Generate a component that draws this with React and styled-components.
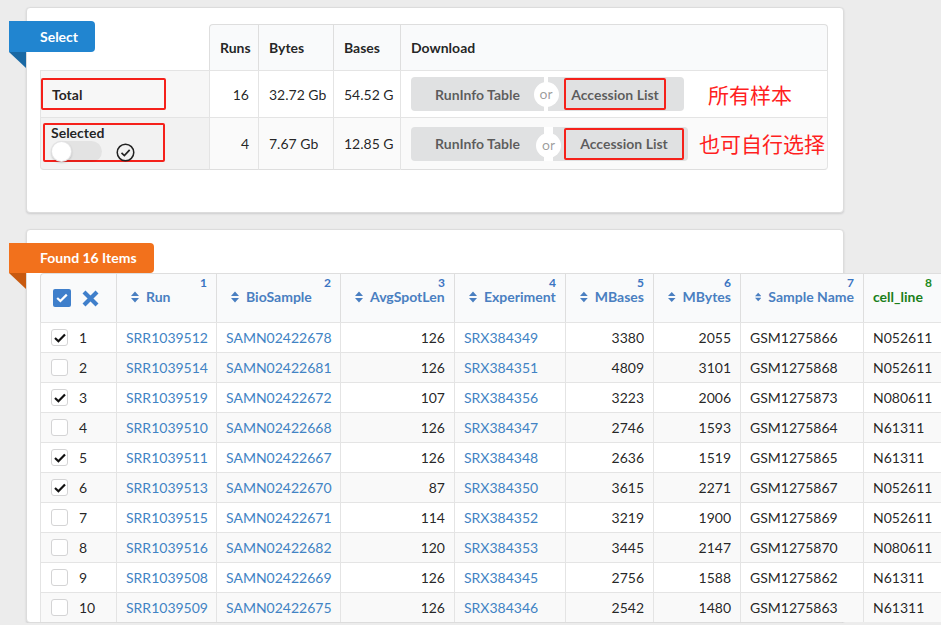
import styled, { createGlobalStyle } from "styled-components";

const GlobalStyle = createGlobalStyle`
  html, body {
    margin: 0;
    padding: 0;
    background: #ececec;
    overflow: hidden;
    font-family: Lato, "Noto Sans CJK SC", sans-serif;
  }
`;

const runs = [
  [1, "SRR1039512", "SAMN02422678", 126, "SRX384349", 3380, 2055, "GSM1275866", "N052611", true],
  [2, "SRR1039514", "SAMN02422681", 126, "SRX384351", 4809, 3101, "GSM1275868", "N052611", false],
  [3, "SRR1039519", "SAMN02422672", 107, "SRX384356", 3223, 2006, "GSM1275873", "N080611", true],
  [4, "SRR1039510", "SAMN02422668", 126, "SRX384347", 2746, 1593, "GSM1275864", "N61311", false],
  [5, "SRR1039511", "SAMN02422667", 126, "SRX384348", 2636, 1519, "GSM1275865", "N61311", true],
  [6, "SRR1039513", "SAMN02422670", 87, "SRX384350", 3615, 2271, "GSM1275867", "N052611", true],
  [7, "SRR1039515", "SAMN02422671", 114, "SRX384352", 3219, 1900, "GSM1275869", "N052611", false],
  [8, "SRR1039516", "SAMN02422682", 120, "SRX384353", 3445, 2147, "GSM1275870", "N080611", false],
  [9, "SRR1039508", "SAMN02422669", 126, "SRX384345", 2756, 1588, "GSM1275862", "N61311", false],
  [10, "SRR1039509", "SAMN02422675", 126, "SRX384346", 2542, 1480, "GSM1275863", "N61311", false],
];

const columns = [
  { label: "Run", width: 100 },
  { label: "BioSample", width: 124 },
  { label: "AvgSpotLen", width: 114 },
  { label: "Experiment", width: 111 },
  { label: "MBases", width: 88 },
  { label: "MBytes", width: 87 },
  { label: "Sample Name", width: 123 },
  { label: "cell_line", width: 78, green: true },
];

const Page = styled.div`
  display: flex;
  flex-direction: column;
  gap: 16px;
  width: 818px;
  padding: 7px 0 0 26px;
`;

const Card = styled.div`
  position: relative;
  background: #fff;
  border: 1px solid #dcdcdc;
  border-radius: 4px;
  box-shadow: 0 1px 2px rgba(34, 36, 38, 0.15);
  padding: ${(p) => p.$pad};
`;

const Ribbon = styled.div`
  position: absolute;
  left: -18px;
  top: 13px;
  height: ${(p) => p.$h}px;
  line-height: ${(p) => p.$h}px;
  padding: 0 17px 0 31px;
  background: ${(p) => p.$color};
  color: #fff;
  font-size: 14px;
  font-weight: 700;
  border-radius: 0 4px 4px 0;
  z-index: 2;
  &::after {
    content: "";
    position: absolute;
    left: 0;
    top: 100%;
    width: 0;
    height: 0;
    border-top: 16px solid ${(p) => p.$dark};
    border-left: 17px solid transparent;
  }
`;

/* ---------- summary table ---------- */

const SummaryTable = styled.table`
  border-collapse: separate;
  border-spacing: 0;
  table-layout: fixed;
  width: 788px;
  font-size: 14px;
  color: rgba(0, 0, 0, 0.87);
`;

const SumHead = styled.th`
  height: 45px;
  padding: 0 10px;
  text-align: left;
  font-weight: 700;
  background: #f9fafb;
  border-top: 1px solid #dedede;
  border-left: 1px solid #dedede;
  &:first-child {
    background: transparent;
    border: none;
  }
  &:nth-child(2) {
    border-top-left-radius: 4px;
  }
  &:last-child {
    border-right: 1px solid #dedede;
    border-top-right-radius: 4px;
  }
`;

const SumRow = styled.tr`
  height: ${(p) => p.$h}px;
  background: ${(p) => (p.$striped ? "#fafafa" : "#fff")};
`;

const SumCell = styled.td`
  padding: 0 ${(p) => (p.$right ? "9px" : "10px")};
  text-align: ${(p) => (p.$right ? "right" : "left")};
  border-top: 1px solid #e4e4e4;
  border-left: 1px solid #e4e4e4;
  vertical-align: middle;
  white-space: nowrap;
  &:last-child {
    border-right: 1px solid #e4e4e4;
  }
  tr:last-child > & {
    border-bottom: 1px solid #dedede;
  }
  tr:last-child > &:first-child {
    border-bottom-left-radius: 4px;
  }
  tr:last-child > &:last-child {
    border-bottom-right-radius: 4px;
  }
`;

const DefCell = styled(SumCell)`
  padding: 0 0 0 ${(p) => p.$inset}px;
  background: rgba(0, 0, 0, 0.03);
  font-weight: 700;
`;

const RedBox = styled.div`
  box-sizing: border-box;
  width: ${(p) => p.$w}px;
  height: ${(p) => p.$h}px;
  border: 2px solid #f5211b;
  border-radius: 2px;
`;

const TotalBox = styled(RedBox)`
  display: flex;
  align-items: center;
  padding-left: 9px;
`;

const SelectedBox = styled(RedBox)`
  display: flex;
  flex-direction: column;
  padding: 0 0 0 6px;
  margin-top: -3px;
  line-height: 16px;
`;

const ToggleRow = styled.div`
  display: flex;
  align-items: flex-end;
  gap: 14px;
`;

const Toggle = styled.div`
  position: relative;
  width: 51px;
  height: 21px;
  border-radius: 11px;
  background: rgba(0, 0, 0, 0.06);
  &::before {
    content: "";
    position: absolute;
    left: 0;
    top: 0;
    width: 21px;
    height: 21px;
    border-radius: 50%;
    background: #fff;
    box-shadow: 0 1px 2px rgba(34, 36, 38, 0.2), 0 0 0 1px rgba(34, 36, 38, 0.12) inset;
  }
`;

const CheckCircle = () => (
  <svg width="19" height="19" viewBox="0 0 20 20">
    <circle cx="10" cy="10" r="8.7" fill="none" stroke="#222" strokeWidth="1.6" />
    <path d="M5.8 10.4 L8.8 13.2 L14.4 7.2" fill="none" stroke="#222" strokeWidth="1.8" />
  </svg>
);

const DownloadWrap = styled.div`
  display: flex;
  align-items: center;
`;

const ButtonGroup = styled.div`
  display: flex;
  align-items: stretch;
  height: 34px;
`;

const Button = styled.div`
  display: flex;
  align-items: center;
  justify-content: ${(p) => (p.$center ? "center" : "flex-start")};
  box-sizing: border-box;
  width: ${(p) => p.$w}px;
  padding-left: ${(p) => p.$pl || 0}px;
  background: #e0e1e2;
  color: rgba(0, 0, 0, 0.6);
  font-weight: 700;
  font-size: 14px;
  border-radius: ${(p) => (p.$first ? "4px 0 0 4px" : "0 4px 4px 0")};
`;

const Or = styled.div`
  position: relative;
  width: ${(p) => p.$w}px;
  background: #fff;
  &::before {
    content: "or";
    position: absolute;
    left: 50%;
    top: 50%;
    width: 25px;
    height: 25px;
    margin: ${(p) => p.$dy - 12.5}px 0 0 -12.5px;
    border-radius: 50%;
    background: #fff;
    color: rgba(0, 0, 0, 0.4);
    font-size: 14px;
    font-weight: 400;
    line-height: 24px;
    text-align: center;
    z-index: 1;
  }
`;

const AccessionBox = styled(RedBox)`
  display: flex;
  align-items: center;
  justify-content: center;
`;

const Note = styled.span`
  margin-left: ${(p) => p.$ml}px;
  color: #ff1f1f;
  font-size: 21px;
  font-family: "Noto Sans CJK SC", sans-serif;
  font-weight: 400;
  line-height: 1;
`;

/* ---------- runs table ---------- */

const RunsTable = styled.table`
  border-collapse: separate;
  border-spacing: 0;
  table-layout: fixed;
  width: 901px;
  font-size: 14px;
  color: rgba(0, 0, 0, 0.87);
`;

const HeadCell = styled.th`
  box-sizing: border-box;
  height: 49px;
  padding: 2px 9px 0 14px;
  vertical-align: top;
  text-align: left;
  background: #f9fafb;
  border-top: 1px solid #dedede;
  border-left: 1px solid #dedede;
  &:first-child {
    border-top-left-radius: 4px;
    padding: 0 0 0 12px;
    vertical-align: middle;
  }
  &:last-child {
    padding-left: 9px;
  }
`;

const ColNumber = styled.div`
  text-align: right;
  font-size: 12px;
  font-weight: 700;
  line-height: 13px;
  color: ${(p) => (p.$green ? "#1f8a1f" : "#3b74c2")};
`;

const ColLabel = styled.div`
  display: flex;
  align-items: center;
  gap: 7px;
  font-size: 14px;
  font-weight: 700;
  line-height: 16px;
  white-space: nowrap;
  color: ${(p) => (p.$green ? "#1a7f1a" : "#4a7fc1")};
`;

const SortIcon = () => (
  <svg width="8" height="12" viewBox="0 0 8 12">
    <path d="M0 5 L4 0.6 L8 5 Z M0 7 L4 11.4 L8 7 Z" fill="#4a7fc1" />
  </svg>
);

const SelectAll = styled.div`
  display: flex;
  align-items: center;
  gap: 11px;
`;

const BlueCheck = styled.div`
  width: 18px;
  height: 18px;
  border-radius: 2px;
  background: #3f7fcb;
  display: flex;
  align-items: center;
  justify-content: center;
`;

const Row = styled.tr`
  height: 30px;
  background: ${(p) => (p.$striped ? "#f9f9f9" : "#fff")};
`;

const Cell = styled.td`
  box-sizing: border-box;
  padding: 0 9px;
  text-align: ${(p) => (p.$right ? "right" : "left")};
  border-top: 1px solid #e4e4e4;
  border-left: 1px solid #e4e4e4;
  white-space: nowrap;
  overflow: hidden;
  color: ${(p) => (p.$link ? "#4183c4" : "rgba(0,0,0,0.87)")};
`;

const IndexCell = styled(Cell)`
  padding-left: 10px;
`;

const IndexWrap = styled.div`
  display: flex;
  align-items: center;
  gap: 11px;
`;

const Box = styled.div`
  box-sizing: border-box;
  width: 17px;
  height: 17px;
  border: 1px solid #d4d4d5;
  border-radius: 3px;
  background: #fff;
  display: flex;
  align-items: center;
  justify-content: center;
`;

const Checkbox = ({ checked }) => (
  <Box>
    {checked && (
      <svg width="12" height="10" viewBox="0 0 12 10">
        <path d="M1 5 L4.4 8.2 L11 1.4" fill="none" stroke="#111" strokeWidth="2.2" />
      </svg>
    )}
  </Box>
);

export default function App() {
  return (
    <>
      <GlobalStyle />
      <Page>
        <Card $pad="16px 16px 42px 13px">
          <Ribbon $h={31} $color="#2185d0" $dark="#1a69a4">Select</Ribbon>
          <SummaryTable>
            <colgroup>
              <col style={{ width: 169 }} />
              <col style={{ width: 49 }} />
              <col style={{ width: 75 }} />
              <col style={{ width: 67 }} />
              <col style={{ width: 428 }} />
            </colgroup>
            <thead>
              <tr>
                <SumHead />
                <SumHead>Runs</SumHead>
                <SumHead>Bytes</SumHead>
                <SumHead>Bases</SumHead>
                <SumHead>Download</SumHead>
              </tr>
            </thead>
            <tbody>
              <SumRow $h={47}>
                <DefCell $inset={0}>
                  <TotalBox $w={125} $h={32}>Total</TotalBox>
                </DefCell>
                <SumCell $right>16</SumCell>
                <SumCell>32.72 Gb</SumCell>
                <SumCell>54.52 G</SumCell>
                <SumCell>
                  <DownloadWrap>
                    <ButtonGroup>
                      <Button $first $center $w={133}>RunInfo Table</Button>
                      <Or $w={4} $dy={0} />
                      <Button $w={136} $pl={16}>
                        <AccessionBox $w={102} $h={32}>Accession List</AccessionBox>
                      </Button>
                    </ButtonGroup>
                    <Note $ml={24}>所有样本</Note>
                  </DownloadWrap>
                </SumCell>
              </SumRow>
              <SumRow $h={53} $striped>
                <DefCell $inset={2}>
                  <SelectedBox $w={122} $h={39}>
                    <span>Selected</span>
                    <ToggleRow>
                      <Toggle />
                      <CheckCircle />
                    </ToggleRow>
                  </SelectedBox>
                </DefCell>
                <SumCell $right>4</SumCell>
                <SumCell>7.67 Gb</SumCell>
                <SumCell>12.85 G</SumCell>
                <SumCell>
                  <DownloadWrap>
                    <ButtonGroup>
                      <Button $first $center $w={133}>RunInfo Table</Button>
                      <Or $w={9} $dy={2} />
                      <Button $w={135} $pl={11}>
                        <AccessionBox $w={120} $h={32}>Accession List</AccessionBox>
                      </Button>
                    </ButtonGroup>
                    <Note $ml={11}>也可自行选择</Note>
                  </DownloadWrap>
                </SumCell>
              </SumRow>
            </tbody>
          </SummaryTable>
        </Card>

        <Card $pad="43px 0 0 13px">
          <Ribbon $h={30} $color="#f2711c" $dark="#c85a10">Found 16 Items</Ribbon>
          <RunsTable>
            <colgroup>
              <col style={{ width: 76 }} />
              {columns.map((c) => (
                <col key={c.label} style={{ width: c.width }} />
              ))}
            </colgroup>
            <thead>
              <tr>
                <HeadCell>
                  <SelectAll>
                    <BlueCheck>
                      <svg width="12" height="10" viewBox="0 0 12 10">
                        <path d="M1.2 5 L4.4 8 L10.8 1.6" fill="none" stroke="#fff" strokeWidth="2.2" />
                      </svg>
                    </BlueCheck>
                    <svg width="17" height="17" viewBox="0 0 17 17">
                      <path d="M2 2 L15 15 M15 2 L2 15" stroke="#3f7fcb" strokeWidth="4.2" />
                    </svg>
                  </SelectAll>
                </HeadCell>
                {columns.map((c, i) => (
                  <HeadCell key={c.label}>
                    <ColNumber $green={c.green}>{i + 1}</ColNumber>
                    <ColLabel $green={c.green}>
                      {!c.green && <SortIcon />}
                      {c.label}
                    </ColLabel>
                  </HeadCell>
                ))}
              </tr>
            </thead>
            <tbody>
              {runs.map((r, i) => (
                <Row key={r[0]} $striped={i % 2 === 1}>
                  <IndexCell>
                    <IndexWrap>
                      <Checkbox checked={r[9]} />
                      {r[0]}
                    </IndexWrap>
                  </IndexCell>
                  <Cell $link>{r[1]}</Cell>
                  <Cell $link>{r[2]}</Cell>
                  <Cell $right>{r[3]}</Cell>
                  <Cell $link>{r[4]}</Cell>
                  <Cell $right>{r[5]}</Cell>
                  <Cell $right>{r[6]}</Cell>
                  <Cell>{r[7]}</Cell>
                  <Cell>{r[8]}</Cell>
                </Row>
              ))}
            </tbody>
          </RunsTable>
        </Card>
      </Page>
    </>
  );
}
